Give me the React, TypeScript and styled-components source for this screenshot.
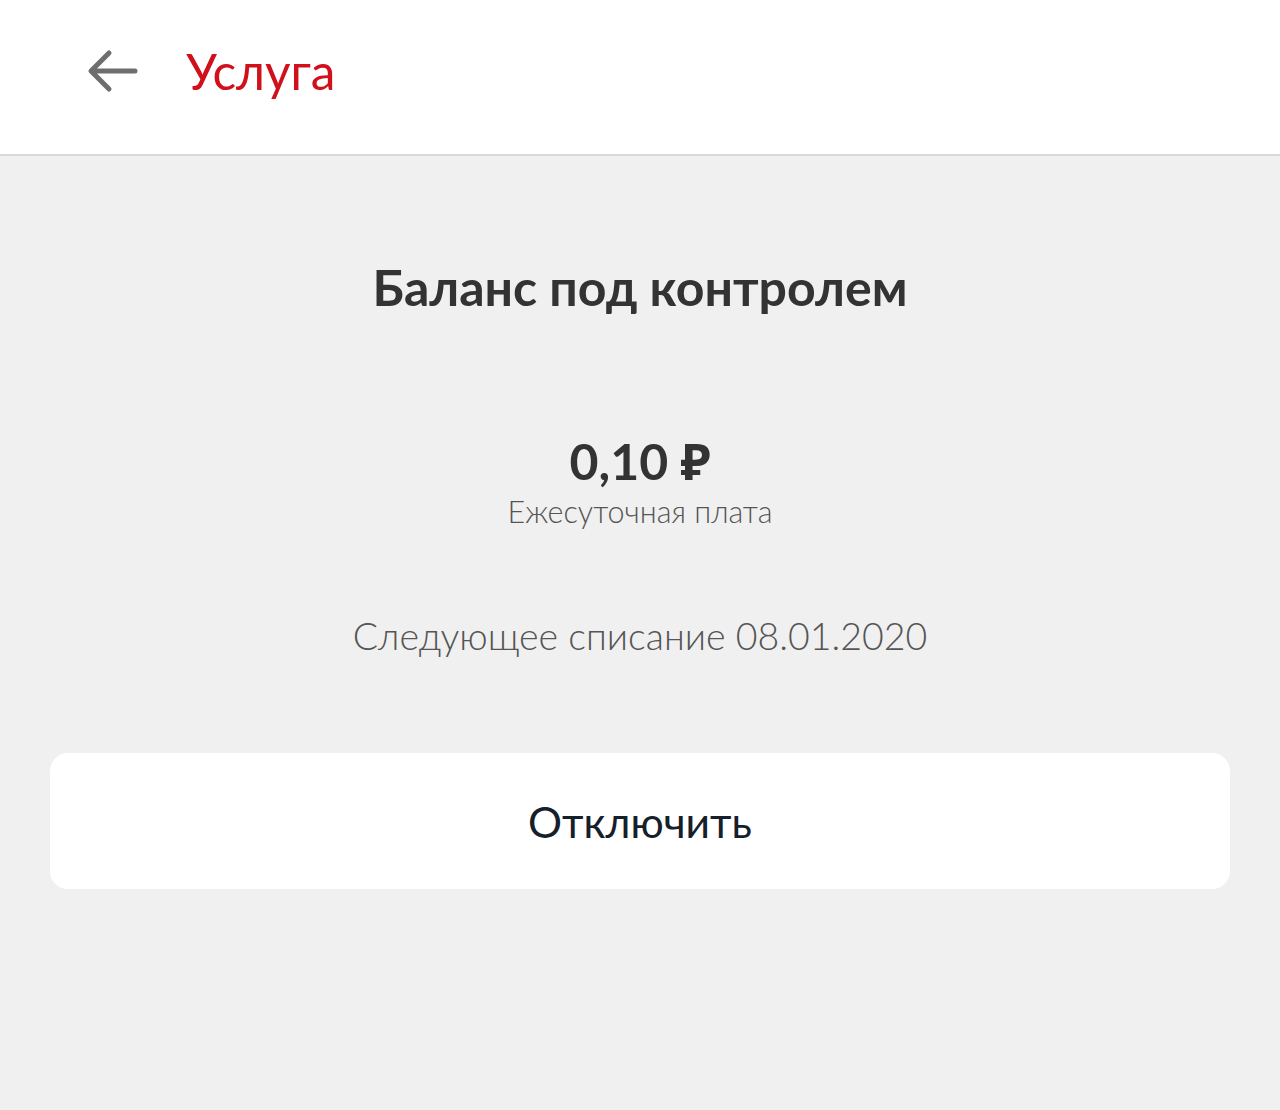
import React from "react";
import styled, { createGlobalStyle } from "styled-components";

const GlobalStyle = createGlobalStyle`
  html, body {
    margin: 0;
    padding: 0;
    background: #f0f0f0;
    font-family: Lato, "Open Sans", "Noto Sans", sans-serif;
  }
  #root {
    min-height: 1110px;
    background: #f0f0f0;
  }
`;

const Header = () => (
  <TopBar>
    <BackButton aria-label="Назад">
      <svg width="52" height="44" viewBox="0 0 52 44" fill="none">
        <path
          d="M49 22H6M23 4L5 22l18 18"
          stroke="#6e6e6e"
          strokeWidth="5"
          strokeLinecap="round"
          strokeLinejoin="round"
        />
      </svg>
    </BackButton>
    <PageTitle>Услуга</PageTitle>
  </TopBar>
);

const App = () => {
  return (
    <Page>
      <GlobalStyle />
      <Header />
      <Content>
        <ServiceName>Баланс под контролем</ServiceName>
        <PriceBlock>
          <Price>0,10 ₽</Price>
          <PriceNote>Ежесуточная плата</PriceNote>
        </PriceBlock>
        <NextCharge>Следующее списание 08.01.2020</NextCharge>
        <ActionButton>Отключить</ActionButton>
      </Content>
    </Page>
  );
};

const Page = styled.div`
  width: 1280px;
  min-height: 1110px;
  background: #f0f0f0;
`;

const TopBar = styled.header`
  height: 156px;
  background: #fff;
  border-bottom: 2px solid #d9d9d9;
  box-sizing: border-box;
  display: flex;
  align-items: center;
  padding: 0 0 12px 86px;
`;

const BackButton = styled.button`
  border: 0;
  background: transparent;
  padding: 0;
  margin: 0 48px 0 0;
  display: flex;
  cursor: pointer;
`;

const PageTitle = styled.h1`
  margin: 0;
  font-size: 49.5px;
  font-weight: 400;
  color: #d0101b;
`;

const Content = styled.main`
  display: flex;
  flex-direction: column;
  align-items: center;
  padding: 103px 50px 0;
`;

const ServiceName = styled.h2`
  margin: 0;
  font-size: 50px;
  font-weight: 700;
  color: #333;
  line-height: 56px;
`;

const PriceBlock = styled.div`
  display: flex;
  flex-direction: column;
  align-items: center;
  margin-top: 118px;
`;

const Price = styled.div`
  font-size: 50px;
  font-weight: 700;
  color: #333;
  line-height: 56px;
`;

const PriceNote = styled.div`
  font-size: 30.5px;
  font-weight: 300;
  color: #555;
  line-height: 44px;
`;

const NextCharge = styled.div`
  margin-top: 79px;
  font-size: 37.5px;
  font-weight: 300;
  color: #555;
  line-height: 48px;
`;

const ActionButton = styled.button`
  margin-top: 93px;
  width: 100%;
  height: 136px;
  border: 0;
  border-radius: 18px;
  background: #fff;
  font-family: inherit;
  font-size: 42.5px;
  font-weight: 400;
  color: #15202b;
  cursor: pointer;
`;

export default App;
